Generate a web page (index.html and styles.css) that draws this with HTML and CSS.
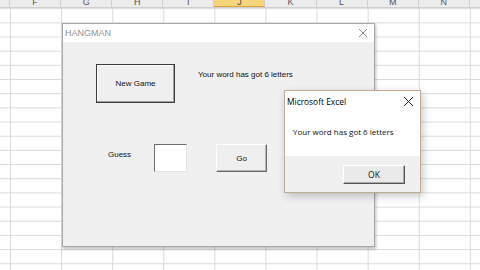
FILE: index.html
```html
<!DOCTYPE html>
<html>
<head>
<meta charset="utf-8">
<link rel="stylesheet" href="styles.css">
</head>
<body>
<div class="sheet">
  <div class="colhead">
    <div class="col stub"></div>
    <div class="col">F</div>
    <div class="col">G</div>
    <div class="col">H</div>
    <div class="col">I</div>
    <div class="col sel">J</div>
    <div class="col">K</div>
    <div class="col">L</div>
    <div class="col">M</div>
    <div class="col">N</div>
    <div class="col last"></div>
  </div>
  <div class="cells"></div>

  <div class="form">
    <div class="form-title">
      <span>HANGMAN</span>
      <svg class="x" width="10" height="10" viewBox="0 0 10 10"><path d="M1 1L9 9M9 1L1 9" stroke="#8a8a8a" stroke-width="1" fill="none"/></svg>
    </div>
    <div class="form-body">
      <div class="row1">
        <button class="btn big">New Game</button>
        <span class="lbl word">Your word has got 6 letters</span>
      </div>
      <div class="row2">
        <span class="lbl guess">Guess</span>
        <div class="textbox"></div>
        <button class="btn go">Go</button>
      </div>
    </div>
  </div>

  <div class="msg">
    <div class="msg-top">
      <div class="msg-title">
        <span>Microsoft Excel</span>
        <svg class="x" width="11" height="11" viewBox="0 0 11 11"><path d="M1 1L10 10M10 1L1 10" stroke="#222" stroke-width="1" fill="none"/></svg>
      </div>
      <div class="msg-text">Your word has got 6 letters</div>
    </div>
    <div class="msg-foot">
      <button class="btn ok">OK</button>
    </div>
  </div>
</div>
</body>
</html>
```

FILE: styles.css
```css
html, body {
  margin: 0;
  padding: 0;
}
body {
  width: 480px;
  height: 270px;
  overflow: hidden;
  background: #fff;
  font-family: "Liberation Sans", Arial, sans-serif;
}
.sheet {
  position: relative;
  width: 480px;
  height: 270px;
  overflow: hidden;
}
.colhead {
  display: flex;
  height: 8px;
  width: 480px;
  overflow: hidden;
  background: #ececec;
  border-bottom: 1px solid #cfcfcf;
  box-sizing: border-box;
}
.col {
  width: 51.1px;
  flex: none;
  box-sizing: border-box;
  border-right: 1px solid #d0d0d0;
  font-size: 9px;
  line-height: 4px;
  color: #555;
  text-align: center;
  overflow: hidden;
}
.col.stub {
  width: 10px;
}
.col.last {
  width: 10px;
  border-right: none;
}
.col.sel {
  background: #f6d57c;
  border-bottom: 1px solid #e2a53b;
  color: #444;
}
.cells {
  height: 262px;
  background-image:
    linear-gradient(to right, #dadada 1px, transparent 1px),
    linear-gradient(to bottom, #dadada 1px, transparent 1px);
  background-size: 51.1px 14.18px;
  background-position: 10px 0.2px;
}

/* userform */
.form {
  position: absolute;
  left: 62px;
  top: 23px;
  width: 313px;
  height: 224px;
  box-sizing: border-box;
  border: 1px solid #a8a8a8;
  background: #f0f0f0;
  box-shadow: 1px 2px 3px rgba(0,0,0,0.25);
  display: flex;
  flex-direction: column;
}
.form-title {
  height: 18px;
  background: #fff;
  display: flex;
  align-items: center;
  justify-content: space-between;
  padding: 0 6px 0 2px;
  font-size: 9px;
  color: #909090;
}
.form-body {
  flex: 1;
  padding: 22px 0 0 33px;
}
.row1 {
  display: flex;
  align-items: flex-start;
}
.btn {
  font-family: "Liberation Sans", Arial, sans-serif;
  font-size: 8px;
  color: #111;
  background: #efefef;
  padding: 0;
  margin: 0;
  box-sizing: border-box;
}
.btn.big {
  width: 79px;
  height: 39px;
  border: 1px solid #3c3c3c;
  box-shadow: inset -1px -1px 0 #a0a0a0, inset 1px 1px 0 #fff;
}
.lbl {
  font-size: 8px;
  color: #111;
}
.word {
  margin: 6px 0 0 23px;
}
.row2 {
  display: flex;
  align-items: flex-start;
  margin: 41px 0 0 12px;
}
.guess {
  width: 46px;
  margin-top: 6px;
}
.textbox {
  width: 33px;
  height: 28px;
  box-sizing: border-box;
  background: #fff;
  border-top: 1px solid #6e6e6e;
  border-left: 1px solid #6e6e6e;
  border-right: 1px solid #e3e3e3;
  border-bottom: 1px solid #e3e3e3;
}
.btn.go {
  margin-left: 29px;
  width: 51px;
  height: 28px;
  border: 1px solid #fff;
  border-right-color: #6a6a6a;
  border-bottom-color: #6a6a6a;
  box-shadow: inset -1px -1px 0 #b4b4b4;
}

/* message box */
.msg {
  position: absolute;
  left: 284px;
  top: 90px;
  width: 137px;
  height: 103px;
  box-sizing: border-box;
  border: 1px solid #c2ab93;
  background: #fff;
  box-shadow: 2px 3px 8px rgba(0,0,0,0.22);
  display: flex;
  flex-direction: column;
  font-family: "Open Sans", "Noto Sans", sans-serif;
}
.msg-top {
  flex: 1;
}
.msg-title {
  display: flex;
  align-items: center;
  justify-content: space-between;
  height: 20px;
  padding: 0 6px 0 2px;
  font-size: 8.4px;
  color: #000;
}
.msg-text {
  padding: 15px 0 0 8px;
  font-size: 8px;
  color: #111;
}
.msg-foot {
  height: 36px;
  background: #f0f0f0;
  display: flex;
  align-items: center;
  justify-content: flex-end;
  padding-right: 15px;
}
.btn.ok {
  width: 62px;
  height: 19px;
  font-family: "Open Sans", "Noto Sans", sans-serif;
  font-size: 8.5px;
  border: 1px solid #fff;
  border-right-color: #555;
  border-bottom-color: #555;
  box-shadow: inset -1px -1px 0 #a8a8a8;
  background: #eaeaea;
}
```
